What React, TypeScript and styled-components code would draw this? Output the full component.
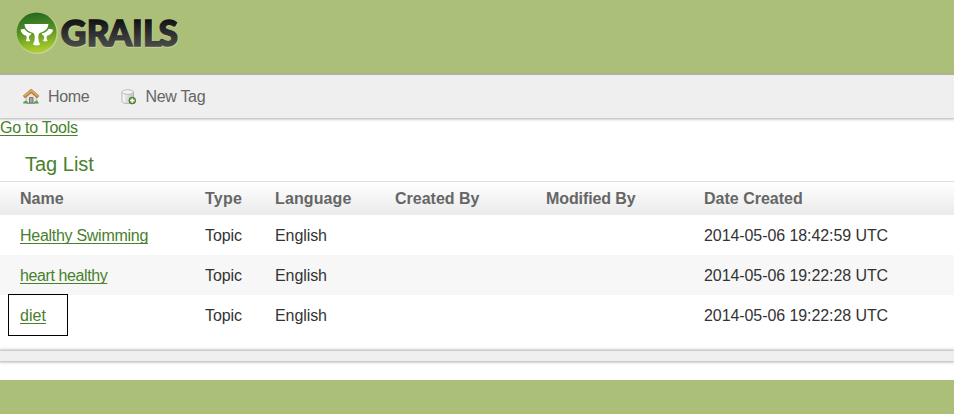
import React from 'react';
import styled, { createGlobalStyle } from 'styled-components';

const GlobalStyle = createGlobalStyle`
  *, *::after { box-sizing: border-box; }
  html { background: #abbf78; }
  body {
    margin: 0;
    overflow: hidden;
    color: #333;
    font: 16px/20px "Liberation Sans", Arial, sans-serif;
  }
`;

const Page = styled.div`
  background: #fff;
  height: 380px;
  display: flex;
  flex-direction: column;
`;

const Header = styled.header`
  flex: none;
  height: 75px;
  background: #abbf78;
`;

const Logo = styled.svg`
  display: block;
`;

const Nav = styled.nav`
  flex: none;
  display: flex;
  gap: 31px;
  height: 43px;
  padding: 0 23px;
  background: #efefef;
  box-shadow: 0 0 3px 1px #aaa;
  z-index: 1;
`;

const NavItem = styled.a`
  display: flex;
  align-items: center;
  gap: 9px;
  color: #666;
  letter-spacing: -0.31px;
`;

const Icon = styled.svg`
  flex: none;
  width: 16px;
  height: 16px;
`;

const Link = styled.a<{ $spacing?: number }>`
  color: #48802c;
  letter-spacing: ${({ $spacing = 0 }) => $spacing}px;
  text-decoration: underline;
  text-decoration-thickness: 1px;
  text-underline-offset: 2px;
  text-decoration-skip-ink: none;
`;

const ToolsLine = styled.div`
  flex: none;
  height: 20px;
`;

const Title = styled.h1`
  flex: none;
  margin: 13px 0 0;
  padding-left: 25px;
  height: 30px;
  color: #48802c;
  font-size: 20px;
  line-height: 26px;
  font-weight: 400;
`;

const Table = styled.table`
  flex: none;
  width: 100%;
  table-layout: fixed;
  border-spacing: 0;
  border-top: 1px solid #dfdfdf;
`;

const Col = styled.col<{ $width?: number }>`
  width: ${({ $width }) => ($width ? `${$width}px` : 'auto')};
`;

const HeadRow = styled.tr`
  height: 33px;
  background: linear-gradient(#fff, #eaeaea);
`;

const HeadCell = styled.th<{ $spacing: number }>`
  padding: 0;
  color: #666;
  text-align: left;
  white-space: nowrap;
  letter-spacing: ${({ $spacing }) => $spacing}px;
  &:first-child { padding-left: 20px; }
`;

const Row = styled.tr<{ $shaded: boolean }>`
  height: 40px;
  background: ${({ $shaded }) => ($shaded ? '#f7f7f7' : '#fff')};
`;

const Cell = styled.td`
  padding: 2px 0 0;
  white-space: nowrap;
  letter-spacing: -0.08px;
  &:first-child { padding-left: 20px; }
`;

const Marked = styled.span`
  position: relative;
  &::after {
    content: '';
    position: absolute;
    left: -12px;
    top: -13px;
    width: 60px;
    height: 42px;
    border: 1px solid #000;
  }
`;

const Pagination = styled.div`
  flex: none;
  height: 10px;
  margin-top: 16px;
  background: #efefef;
  box-shadow: 0 0 3px 1px #aaa;
`;

const rows = [
  { name: 'Healthy Swimming', date: '2014-05-06 18:42:59 UTC', marked: false, spacing: -0.28 },
  { name: 'heart healthy', date: '2014-05-06 19:22:28 UTC', marked: false, spacing: -0.4 },
  { name: 'diet', date: '2014-05-06 19:22:28 UTC', marked: true, spacing: 0.05 },
];

const widths = [205, 70, 120, 151, 158];
const headings = [
  { label: 'Name', spacing: 0 },
  { label: 'Type', spacing: 0.25 },
  { label: 'Language', spacing: 0.12 },
  { label: 'Created By', spacing: 0 },
  { label: 'Modified By', spacing: -0.1 },
  { label: 'Date Created', spacing: 0 },
];

function GrailsLogo() {
  return (
    <Logo width="200" height="75" role="img" aria-label="Grails">
      <defs>
        <linearGradient id="disc" x1="0" y1="0" x2="0.15" y2="1">
          <stop offset="0" stopColor="#1f6420" />
          <stop offset="0.45" stopColor="#4c8a24" />
          <stop offset="1" stopColor="#aacb2b" />
        </linearGradient>
        <linearGradient id="letters" gradientUnits="userSpaceOnUse" x1="0" y1="19" x2="0" y2="47">
          <stop offset="0" stopColor="#111" />
          <stop offset="1" stopColor="#4c4c4c" />
        </linearGradient>
      </defs>
      <circle cx="37.2" cy="33.2" r="20.8" fill="#c3d295" />
      <circle cx="36.6" cy="32.6" r="20" fill="url(#disc)" />
      <g fill="#fff">
        <path d="M24.5 24H48.4C48.2 29 44.5 31.5 40.2 32.8C38.3 33.5 38.2 36 38.4 39C38.6 42 39.7 43.3 40.2 44.6Q36.5 46.6 32.8 44.6C33.5 43 34.6 41.8 34.7 39C34.8 36 34.7 33.5 32.6 32.8C28.2 31.5 24.7 29 24.5 24Z" />
        <path d="M20.4 29.8L24.3 28.7C26.1 31.5 28.5 32.8 31.5 33.6C31 35.2 29.3 35.5 29 36.2C28.8 38 29.1 39.5 30.4 40.7Q28.2 42.2 25.7 40.8C27 39 26.9 36.9 26.2 35.7C23.2 35.3 21.3 33.2 20.4 29.8Z" />
        <path d="M53.2 29.8L48.9 28.7C47.2 31.5 44.5 32.8 41.6 33.6C42.1 35.2 43.6 35.5 44.1 36.2C44.3 38 44 39.5 42.8 40.7Q45.1 42.2 47.6 40.8C46.4 39 46.4 36.9 47.1 35.7C50.1 35.3 52.3 33.2 53.2 29.8Z" />
      </g>
      <g fontFamily="Lato, sans-serif" fontWeight="900" fontSize="35.5" strokeWidth="1.4">
        <text x="61.5 87.4 107.8 132.7 143.7 159.3" y="47.1" fill="#c3d295" stroke="#c3d295">GRAILS</text>
        <text x="60.8 86.8 107.2 132 143 158.6" y="46.3" fill="url(#letters)" stroke="url(#letters)">GRAILS</text>
      </g>
    </Logo>
  );
}

function HouseIcon() {
  return (
    <Icon viewBox="0 0 16 16">
      <path d="M3 7.5L8 3L13.5 7.5V14H3Z" fill="#e8e5df" stroke="#aaa49b" strokeWidth=".6" />
      <path d="M6.5 8.5H10V14H6.5Z" fill="#a5a5a5" stroke="#686868" strokeWidth=".8" />
      <path d="M1 8.1L8.2 1.9L15.2 8.1" fill="none" stroke="#a87034" strokeWidth="3.3" />
      <path d="M1.4 7.3L8.2 1.6L14.9 7.3" fill="none" stroke="#dca65e" strokeWidth="2" />
      <path d="M0 14.5Q.5 12 2 12.4Q3.3 10.6 4.5 12.8L5.6 14.5ZM10.7 14.5Q11.5 12 13 12.1Q14.4 10.8 15 13L16 14.5Z" fill="#54a15a" />
      <path d="M4 14.5H12" stroke="#8a9a80" />
    </Icon>
  );
}

function DatabaseAddIcon() {
  return (
    <Icon viewBox="-1 0 16 16">
      <defs>
        <linearGradient id="drum">
          <stop offset="0" stopColor="#fff" />
          <stop offset=".4" stopColor="#dedede" />
          <stop offset="1" stopColor="#c4c4c4" />
        </linearGradient>
      </defs>
      <path d="M1 3V12.5C1 15.2 12.5 15.2 12.5 12.5V3Z" fill="url(#drum)" stroke="#b4b4b4" />
      <ellipse cx="6.75" cy="3" rx="5.75" ry="2.3" fill="#f3f3f3" stroke="#bcbcbc" />
      <circle cx="11.3" cy="11.6" r="3.3" fill="#6fa552" stroke="#3f742b" />
      <path d="M9.1 11.6H13.5M11.3 9.4V13.8" stroke="#fff" strokeWidth="1.5" />
    </Icon>
  );
}

export default function App() {
  return (
    <>
      <GlobalStyle />
      <Page>
        <Header><GrailsLogo /></Header>
        <Nav>
          <NavItem><HouseIcon />Home</NavItem>
          <NavItem><DatabaseAddIcon />New Tag</NavItem>
        </Nav>
        <ToolsLine><Link href="#" $spacing={-0.27}>Go to Tools</Link></ToolsLine>
        <Title>Tag List</Title>
        <Table>
          <colgroup>
            {widths.map((w, i) => <Col key={i} $width={w} />)}
            <Col />
          </colgroup>
          <thead>
            <HeadRow>
              {headings.map((h) => <HeadCell key={h.label} $spacing={h.spacing}>{h.label}</HeadCell>)}
            </HeadRow>
          </thead>
          <tbody>
            {rows.map((r, i) => {
              const link = <Link href="#" $spacing={r.spacing}>{r.name}</Link>;
              return (
                <Row key={r.name} $shaded={i % 2 === 1}>
                  <Cell>{r.marked ? <Marked>{link}</Marked> : link}</Cell>
                  <Cell>Topic</Cell>
                  <Cell>English</Cell>
                  <Cell />
                  <Cell />
                  <Cell>{r.date}</Cell>
                </Row>
              );
            })}
          </tbody>
        </Table>
        <Pagination />
      </Page>
    </>
  );
}
